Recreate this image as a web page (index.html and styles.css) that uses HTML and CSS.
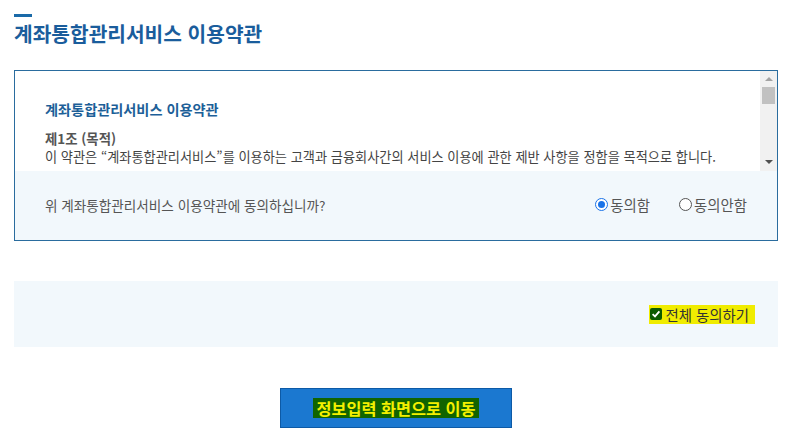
FILE: index.html
```html
<!DOCTYPE html>
<html lang="ko">
<head>
  <meta charset="UTF-8">
  <meta name="viewport" content="width=device-width, initial-scale=1.0">
  <title>계좌통합관리서비스 이용약관</title>
  <link rel="stylesheet" href="styles.css">
</head>
<body>

<div class="page">
  <h1 class="page-title">계좌통합관리서비스 이용약관</h1>

  <div class="terms-box">
    <div class="terms-scroll">
      <div class="terms-content">
        <h2>계좌통합관리서비스 이용약관</h2>
        <h3>제1조 (목적)</h3>
        <p>이 약관은 “계좌통합관리서비스”를 이용하는 고객과 금융회사간의 서비스 이용에 관한 제반 사항을 정함을 목적으로 합니다.</p>
      </div>
      <div class="scrollbar">
        <span class="arrow up"></span>
        <span class="thumb"></span>
        <span class="track"></span>
        <span class="arrow down"></span>
      </div>
    </div>
    <div class="terms-question">
      <span>위 계좌통합관리서비스 이용약관에 동의하십니까?</span>
      <div class="radios">
        <label class="radio"><span class="dot checked"></span>동의함</label>
        <label class="radio"><span class="dot"></span>동의안함</label>
      </div>
    </div>
  </div>

  <div class="all-agree">
    <label class="check-all">
      <span class="checkbox">
        <svg width="10" height="10" viewBox="0 0 10 10"><path d="M1.6 5.2 L4 7.4 L8.4 2.4" fill="none" stroke="#fff" stroke-width="1.8"/></svg>
      </span>
      전체 동의하기
    </label>
  </div>

  <div class="actions">
    <button class="next-btn"><span>정보입력 화면으로 이동</span></button>
  </div>
</div>

</body>
</html>
```

FILE: styles.css
```css
body {
  margin: 0;
  font-family: "Noto Sans CJK KR", "Noto Sans", sans-serif;
  background: #fff;
  color: #333;
}

.page {
  padding: 14px 13px 0 14px;
}

.page-title {
  margin: 0;
  padding-top: 7px;
  font-size: 20.3px;
  font-weight: bold;
  color: #1a5d9c;
  line-height: 24px;
  position: relative;
}

.page-title::before {
  content: "";
  position: absolute;
  left: 0;
  top: 0;
  width: 18px;
  height: 3px;
  background: #1a6aa8;
}

.terms-box {
  margin-top: 25px;
  border: 1px solid #2a6c9e;
  height: 169px;
  display: flex;
  flex-direction: column;
}

.terms-scroll {
  height: 100px;
  display: flex;
  background: #fff;
}

.terms-content {
  flex: 1;
  padding: 28px 0 0 30px;
  overflow: hidden;
  white-space: nowrap;
}

.terms-content h2 {
  margin: 0 0 9px;
  font-size: 14.2px;
  font-weight: bold;
  color: #1d5f98;
  line-height: 21px;
}

.terms-content h3 {
  margin: 0;
  font-size: 13.4px;
  font-weight: bold;
  color: #555;
  line-height: 18px;
}

.terms-content p {
  margin: 0;
  font-size: 13.2px;
  color: #444;
  line-height: 19px;
}

.scrollbar {
  width: 17px;
  background: #f1f1f1;
  display: flex;
  flex-direction: column;
  align-items: center;
}

.arrow {
  width: 0;
  height: 0;
  border-left: 4px solid transparent;
  border-right: 4px solid transparent;
}

.arrow.up {
  margin-top: 6px;
  border-bottom: 4px solid #a3a3a3;
}

.arrow.down {
  margin-bottom: 7px;
  border-top: 4px solid #505050;
}

.thumb {
  margin-top: 6px;
  width: 13px;
  height: 17px;
  background: #c1c1c1;
}

.track {
  flex: 1;
}

.terms-question {
  flex: 1;
  background: #f2f8fc;
  display: flex;
  align-items: center;
  justify-content: space-between;
  padding: 0 30px 2px 30px;
  font-size: 13.6px;
  color: #555;
}

.radios {
  display: flex;
  gap: 29px;
  font-size: 14.4px;
}

.radio {
  display: flex;
  align-items: center;
  gap: 2px;
  color: #555;
}

.dot {
  width: 11px;
  height: 11px;
  border: 1px solid #555;
  border-radius: 50%;
  background: #fff;
  box-sizing: content-box;
  position: relative;
}

.dot.checked {
  border-color: #1a73e8;
}

.dot.checked::after {
  content: "";
  position: absolute;
  left: 2px;
  top: 2px;
  width: 7px;
  height: 7px;
  border-radius: 50%;
  background: #1a73e8;
}

.all-agree {
  margin-top: 40px;
  height: 66px;
  background: #f2f8fc;
  display: flex;
  align-items: center;
  justify-content: flex-end;
  padding-right: 23px;
}

.check-all {
  display: flex;
  align-items: center;
  gap: 4px;
  background: #f0ec00;
  padding: 0 6px 0 1px;
  height: 19px;
  font-size: 14.4px;
  color: #333;
}

.checkbox {
  width: 12px;
  height: 12px;
  background: #0b5a00;
  border-radius: 2px;
  display: flex;
  align-items: center;
  justify-content: center;
}

.actions {
  margin-top: 41px;
  display: flex;
  justify-content: center;
}

.next-btn {
  width: 232px;
  height: 40px;
  background: #1b78d0;
  border: 1px solid #0d5aa6;
  font-family: inherit;
  display: flex;
  align-items: center;
  justify-content: center;
  padding: 0;
}

.next-btn span {
  background: #116400;
  color: #f4f000;
  font-size: 16.3px;
  font-weight: bold;
  padding: 0 4px;
  line-height: 20px;
}
```
